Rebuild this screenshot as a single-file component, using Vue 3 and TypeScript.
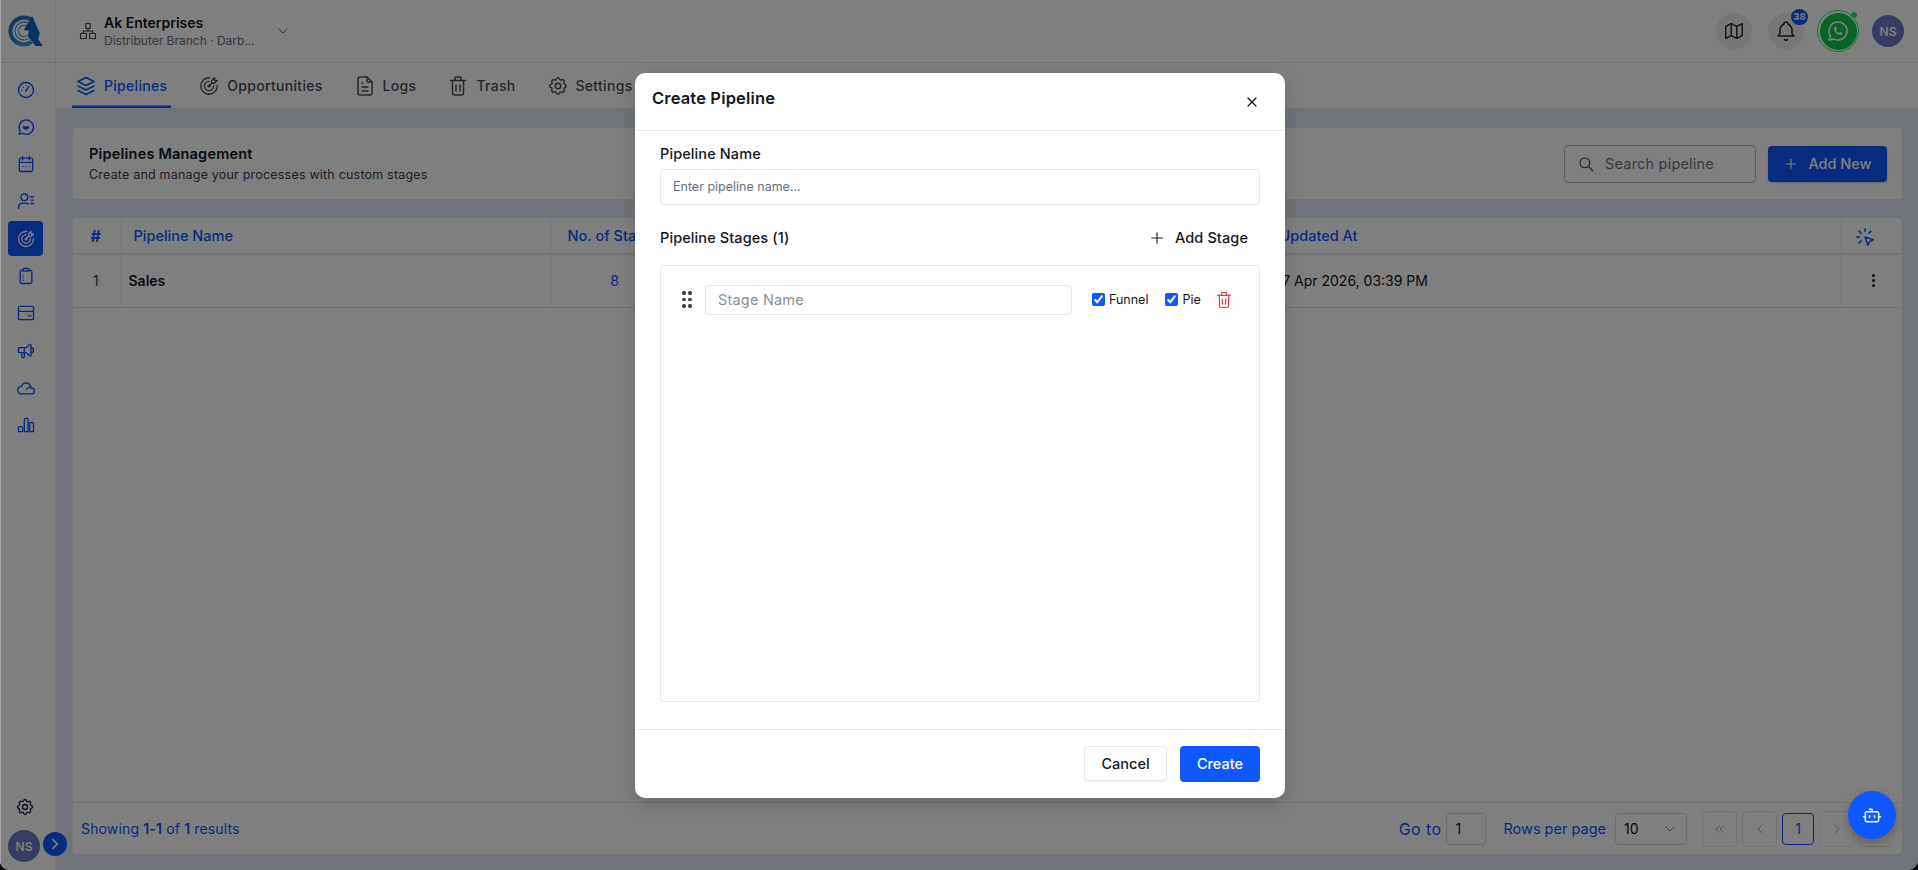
<script setup lang="ts">
import { h } from 'vue';

// a path starting with "F" is a filled shape, the rest are strokes
const icons: Record<string, string[]> = {
  gauge: ['M12 3a9 9 0 1 0 0 18a9 9 0 0 0 0 -18z', 'M11.500 13.500l4 -5.500', 'M7 12.500h.01', 'M8.800 8.800h.01', 'M12 7h.01'],
  chat: ['M3.500 20.500l1.700 -3.600a8.600 8.600 0 1 1 3 2.800z', 'FM8 11h8a4 4 0 0 1 -8 0z'],
  calendar: ['M4 7a2 2 0 0 1 2 -2h12a2 2 0 0 1 2 2v12a2 2 0 0 1 -2 2h-12a2 2 0 0 1 -2 -2z', 'M8 3v4', 'M16 3v4', 'M4 10h16', 'M8 15h.01', 'M12 15h.01', 'M16 15h.01'],
  users: ['M10 3.500a4 4 0 1 0 0 8a4 4 0 0 0 0 -8z', 'M3 21v-1.500a5 5 0 0 1 5 -5h4a5 5 0 0 1 3 1', 'M17 7h4', 'M18 11h3', 'M18 15h3'],
  target: ['M12 12m-1 0a1 1 0 1 0 2 0a1 1 0 1 0 -2 0', 'M12 7a5 5 0 1 0 5 5', 'M13 3.055a9 9 0 1 0 7.941 7.945', 'M15 6v3h3l3 -3h-3v-3z', 'M15 9l-3 3'],
  clipboard: ['M8 5h-1a2 2 0 0 0 -2 2v12a2 2 0 0 0 2 2h10a2 2 0 0 0 2 -2v-12a2 2 0 0 0 -2 -2h-1', 'M8 5a2 2 0 0 1 2 -2h4a2 2 0 0 1 2 2v1h-8z', 'M8.500 11h.01', 'M8.500 14h.01', 'M8.500 17h.01'],
  card: ['M3 5a1 1 0 0 1 1 -1h16a1 1 0 0 1 1 1v14a1 1 0 0 1 -1 1h-16a1 1 0 0 1 -1 -1z', 'M3 10h18', 'M15 15.500h3'],
  megaphone: ['M18 8a3 3 0 0 1 0 6', 'M10 8v11a1 1 0 0 1 -1 1h-1a1 1 0 0 1 -1 -1v-5', 'M12 8l4.524 -3.770a.9 .9 0 0 1 1.476 .692v12.156a.9 .9 0 0 1 -1.476 .692l-4.524 -3.770h-8a1 1 0 0 1 -1 -1v-4a1 1 0 0 1 1 -1z'],
  cloud: ['M6.657 19c-2.572 0 -4.657 -2.007 -4.657 -4.483c0 -2.475 2.085 -4.482 4.657 -4.482c.393 -1.762 1.794 -3.200 3.675 -3.773c1.880 -.572 3.956 -.193 5.444 1c1.488 1.190 2.162 3.007 1.770 4.769h.99c1.913 0 3.464 1.560 3.464 3.486c0 1.927 -1.551 3.483 -3.465 3.483z', 'M13 13.500a4 4 0 0 1 4.500 -2.500'],
  bars: ['M3 15a1 1 0 0 1 1 -1h3a1 1 0 0 1 1 1v5h-5z', 'M10 5a1 1 0 0 1 1 -1h2.500a1 1 0 0 1 1 1v15h-4.500z', 'M16.500 10a1 1 0 0 1 1 -1h2.500a1 1 0 0 1 1 1v10h-4.500z'],
  settings: ['M10.325 4.317c.426 -1.756 2.924 -1.756 3.350 0a1.724 1.724 0 0 0 2.573 1.066c1.543 -.94 3.310 .826 2.370 2.370a1.724 1.724 0 0 0 1.065 2.572c1.756 .426 1.756 2.924 0 3.350a1.724 1.724 0 0 0 -1.066 2.573c.94 1.543 -.826 3.310 -2.370 2.370a1.724 1.724 0 0 0 -2.572 1.065c-.426 1.756 -2.924 1.756 -3.350 0a1.724 1.724 0 0 0 -2.573 -1.066c-1.543 .94 -3.310 -.826 -2.370 -2.370a1.724 1.724 0 0 0 -1.065 -2.572c-1.756 -.426 -1.756 -2.924 0 -3.350a1.724 1.724 0 0 0 1.066 -2.573c-.94 -1.543 .826 -3.310 2.370 -2.370c1 .608 2.296 .07 2.572 -1.065z', 'M9 12a3 3 0 1 0 6 0a3 3 0 0 0 -6 0'],
  stack: ['M12 3.500l-8 4l8 4l8 -4z', 'M4 12l8 4l8 -4', 'M4 16.500l8 4l8 -4'],
  file: ['M14 3v4a1 1 0 0 0 1 1h4', 'M17 21h-10a2 2 0 0 1 -2 -2v-14a2 2 0 0 1 2 -2h7l5 5v11a2 2 0 0 1 -2 2z', 'M9 9h1', 'M9 13h6', 'M9 17h6'],
  trash: ['M4.500 6.500h15', 'M6.500 6.500v12.500a2 2 0 0 0 2 2h7a2 2 0 0 0 2 -2v-12.500', 'M9 6.500v-2.500a1 1 0 0 1 1 -1h4a1 1 0 0 1 1 1v2.500', 'M10 11v6', 'M14 11v6'],
  map: ['M3 7l6 -3l6 3l6 -3v13l-6 3l-6 -3l-6 3z', 'M9 4v13', 'M15 7v13'],
  bell: ['M10 5a2 2 0 1 1 4 0a7 7 0 0 1 4 6v3a4 4 0 0 0 2 3h-16a4 4 0 0 0 2 -3v-3a7 7 0 0 1 4 -6', 'M10.500 20.500a2 2 0 0 0 3 0'],
  whatsapp: ['M3 21l1.650 -3.800a9 9 0 1 1 3.400 2.900z', 'M9 10a.5 .5 0 0 0 1 0v-1a.5 .5 0 0 0 -1 0v1a5 5 0 0 0 5 5h1a.5 .5 0 0 0 0 -1h-1a.5 .5 0 0 0 0 1'],
  org: ['M9.500 3h5v6h-5z', 'M3 15h7v6h-7z', 'M14 15h7v6h-7z', 'M12 9v3', 'M6.500 15v-3h11v3'],
  click: ['M3 12h3', 'M12 3v3', 'M7.800 7.800l-2.200 -2.200', 'M16.200 7.800l2.200 -2.200', 'M7.800 16.200l-2.200 2.200', 'M12 12l9 3l-4 2l-2 4z'],
  search: ['M4 10.500a6.500 6.500 0 1 0 13 0a6.500 6.500 0 0 0 -13 0', 'M21 21l-5.800 -5.800'],
  plus: ['M12 5v14', 'M5 12h14'],
  x: ['M18 6l-12 12', 'M6 6l12 12'],
  down: ['M6 9l6 6l6 -6'],
  right: ['M9 6l6 6l-6 6'],
  left: ['M15 6l-6 6l6 6'],
  first: ['M11 7l-5 5l5 5', 'M17 7l-5 5l5 5'],
  robot: ['M12 8v-3h-3', 'M6 8h12a2 2 0 0 1 2 2v8a2 2 0 0 1 -2 2h-12a2 2 0 0 1 -2 -2v-8a2 2 0 0 1 2 -2z', 'M2 14h2', 'M20 14h2', 'M15 13v2', 'M9 13v2'],
};

const Icon = (props: { name: string; size?: number; width?: number }) =>
  h(
    'svg',
    {
      width: props.size ?? 20,
      height: props.size ?? 20,
      viewBox: '0 0 24 24',
      fill: 'none',
      stroke: 'currentColor',
      'stroke-width': props.width ?? 1.6,
      'stroke-linecap': 'round',
      'stroke-linejoin': 'round',
    },
    icons[props.name].map((d) =>
      d[0] === 'F' ? h('path', { d: d.slice(1), fill: 'currentColor', stroke: 'none' }) : h('path', { d }),
    ),
  );
Icon.props = ['name', 'size', 'width'];

const navItems = ['gauge', 'chat', 'calendar', 'users', 'target', 'clipboard', 'card', 'megaphone', 'cloud', 'bars'];
const activeNav = 'target';

const tabs = [
  { label: 'Pipelines', icon: 'stack', size: 24, active: true },
  { label: 'Opportunities', icon: 'target', size: 22, active: false },
  { label: 'Logs', icon: 'file', size: 24, active: false },
  { label: 'Trash', icon: 'trash', size: 24, active: false },
  { label: 'Settings', icon: 'settings', size: 22, active: false },
];
</script>

<template>
  <div class="window">
    <aside class="sidebar">
      <div class="logo">
        <svg width="36" height="34" viewBox="0 0 36 34" fill="none">
          <defs>
            <linearGradient id="lg" x1="0" y1="0" x2="1" y2="1">
              <stop offset="0" stop-color="#1f6cbc" />
              <stop offset="1" stop-color="#2f9ae8" />
            </linearGradient>
          </defs>
          <path d="M24.700 6.700A13.500 13.500 0 1 0 23.700 28" stroke="url(#lg)" stroke-width="4" />
          <path d="M21.200 9.600A9 9 0 1 0 21.800 23.900" stroke="#3aa0e8" stroke-width="1.200" />
          <path d="M18.750 12.200A5.500 5.500 0 1 0 19.500 21.200" stroke="#3aa0e8" stroke-width="1.200" />
          <path d="M24.200 2L15.800 16L20.800 16.700L19.800 22L27.500 32L34.800 32L30.200 25.300L31.800 19.300Z" fill="#1464c0" />
        </svg>
      </div>
      <nav class="nav">
        <a v-for="item in navItems" :key="item" class="nav-item" :class="{ active: item === activeNav }">
          <Icon :name="item" :size="20" />
        </a>
      </nav>
      <div class="side-foot">
        <Icon class="side-gear" name="settings" :size="20" />
        <div class="avatar">NS</div>
      </div>
      <button class="collapse"><Icon name="right" :size="18" :width="2.2" /></button>
    </aside>

    <div class="content">
      <header class="topbar">
        <div class="org">
          <Icon class="org-icon" name="org" :size="20" :width="1.3" />
          <div>
            <div class="org-name">Ak Enterprises</div>
            <div class="org-sub">Distributer Branch · Darb...</div>
          </div>
          <Icon class="org-down" name="down" :size="16" :width="1.4" />
        </div>
        <div class="top-actions">
          <button class="round"><Icon name="map" :size="22" :width="1.5" /></button>
          <button class="round bell">
            <Icon name="bell" :size="24" :width="1.5" />
            <span class="badge">38</span>
          </button>
          <button class="wa">
            <span class="wa-inner"><Icon name="whatsapp" :size="24" :width="1.6" /></span>
            <span class="wa-dot"></span>
          </button>
          <div class="avatar">NS</div>
        </div>
      </header>

      <div class="tabs">
        <a v-for="tab in tabs" :key="tab.label" class="tab" :class="{ active: tab.active }">
          <Icon :name="tab.icon" :size="tab.size" :width="1.5" />
          <span>{{ tab.label }}</span>
        </a>
      </div>

      <main class="page">
        <section class="intro">
          <div>
            <h2>Pipelines Management</h2>
            <p>Create and manage your processes with custom stages</p>
          </div>
          <div class="intro-actions">
            <label class="search">
              <Icon name="search" :size="18" :width="1.5" />
              <input placeholder="Search pipeline" />
            </label>
            <button class="add-new"><Icon name="plus" :size="16" />Add New</button>
          </div>
        </section>

        <section class="table-card">
          <div class="table-wrap">
            <table>
              <colgroup>
                <col style="width: 48px" />
                <col style="width: 429px" />
                <col style="width: 129px" />
                <col style="width: 588px" />
                <col />
                <col style="width: 61px" />
              </colgroup>
              <thead>
                <tr>
                  <th class="num">#</th>
                  <th>Pipeline Name</th>
                  <th class="center">No. of Stages</th>
                  <th></th>
                  <th>Updated At</th>
                  <th class="act"><Icon name="click" :size="22" :width="1.6" /></th>
                </tr>
              </thead>
              <tbody>
                <tr>
                  <td class="num">1</td>
                  <td class="name">Sales</td>
                  <td class="count">8</td>
                  <td></td>
                  <td>17 Apr 2026, 03:39 PM</td>
                  <td class="kebab"><span></span><span></span><span></span></td>
                </tr>
              </tbody>
            </table>
          </div>
          <footer class="pager">
            <div class="showing">Showing <b>1-1</b> of <b>1</b> results</div>
            <div class="pager-right">
              <span class="goto">Go to</span>
              <input class="goto-input" value="1" />
              <span class="rows">Rows per page</span>
              <div class="rows-select">10<Icon name="down" :size="16" :width="1.4" /></div>
              <div class="pages">
                <button class="pg"><Icon name="first" :size="16" :width="1.4" /></button>
                <button class="pg"><Icon name="left" :size="16" :width="1.4" /></button>
                <button class="pg current">1</button>
                <button class="pg"><Icon name="right" :size="16" :width="1.4" /></button>
                <button class="pg"></button>
              </div>
            </div>
          </footer>
        </section>
      </main>
    </div>

    <div class="overlay">
      <div class="modal">
        <div class="modal-head">
          <h3>Create Pipeline</h3>
          <button class="close"><Icon name="x" :size="16" :width="1.8" /></button>
        </div>
        <div class="modal-body">
          <label class="field-label">Pipeline Name</label>
          <input class="name-input" placeholder="Enter pipeline name..." />
          <div class="stages-head">
            <span class="field-label">Pipeline Stages (1)</span>
            <button class="add-stage"><Icon name="plus" :size="18" :width="1.5" />Add Stage</button>
          </div>
          <div class="stages-box">
            <div class="stage-row">
              <span class="grip"><i></i><i></i><i></i><i></i><i></i><i></i></span>
              <input class="stage-input" placeholder="Stage Name" />
              <label class="check"><input type="checkbox" checked />Funnel</label>
              <label class="check"><input type="checkbox" checked />Pie</label>
              <button class="stage-del"><Icon name="trash" :size="20" :width="1.4" /></button>
            </div>
          </div>
        </div>
        <div class="modal-foot">
          <button class="btn-cancel">Cancel</button>
          <button class="btn-create">Create</button>
        </div>
      </div>
    </div>

    <button class="fab"><Icon name="robot" :size="20" :width="1.8" /></button>
  </div>
</template>

<style>
html,
body {
  margin: 0;
  background: #0c0c0c;
}
</style>

<style scoped>
* {
  box-sizing: border-box;
}

button,
input {
  font-family: inherit;
}

button {
  border: 0;
  background: none;
  padding: 0;
  color: inherit;
}

.window {
  --blue: #0f57ff;
  position: relative;
  display: flex;
  width: 1918px;
  height: 870px;
  overflow: hidden;
  border-radius: 0 0 10px 10px;
  background: #e0e8f2;
  color: #14161f;
  font-family: Inter, 'Liberation Sans', sans-serif;
  font-size: 14px;
}

/* sidebar */
.sidebar {
  position: relative;
  z-index: 1;
  display: flex;
  flex-direction: column;
  flex: 0 0 56px;
  background: #fff;
  border-right: 1px solid #ebebeb;
}

.logo {
  display: flex;
  align-items: center;
  justify-content: center;
  height: 63px;
  padding-right: 4px;
  border-bottom: 1px solid #e2e2e2;
}

.nav {
  display: flex;
  flex-direction: column;
  gap: 2.300px;
  padding: 9px 8px 0;
}

.nav-item {
  display: flex;
  align-items: center;
  justify-content: center;
  flex: none;
  width: 35px;
  height: 35px;
  border-radius: 4px;
  color: var(--blue);
}

.nav-item.active {
  background: var(--blue);
  color: #fff;
}

.side-foot {
  display: flex;
  flex-direction: column;
  align-items: flex-start;
  gap: 13px;
  margin-top: auto;
  padding: 0 0 8px 8px;
}

.side-gear {
  margin-left: 7px;
  color: #1e2430;
}

.avatar {
  display: flex;
  align-items: center;
  justify-content: center;
  flex: none;
  width: 32px;
  height: 32px;
  border-radius: 50%;
  background: #7079c4;
  color: #fff;
  font-size: 12px;
  font-weight: 600;
}

.collapse {
  position: absolute;
  left: 43px;
  bottom: 14px;
  display: flex;
  align-items: center;
  justify-content: center;
  width: 24px;
  height: 24px;
  border-radius: 50%;
  background: var(--blue);
  color: #fff;
}

/* right column */
.content {
  display: flex;
  flex-direction: column;
  flex: 1;
  min-width: 0;
}

.topbar {
  display: flex;
  align-items: center;
  justify-content: space-between;
  flex: 0 0 63px;
  padding: 0 14px 0 22px;
  background: #fff;
  border-bottom: 1px solid #e2e2e2;
}

.org {
  display: flex;
  align-items: center;
  gap: 6px;
}

.org-icon {
  color: #3a3f4a;
}

.org-name {
  font-size: 14px;
  font-weight: 600;
  line-height: 18px;
}

.org-sub {
  margin-top: 1px;
  font-size: 12px;
  line-height: 16px;
  color: #6f7480;
}

.org-down {
  margin-left: 14px;
  color: #555a66;
}

.top-actions {
  display: flex;
  align-items: center;
}

.round {
  position: relative;
  display: flex;
  align-items: center;
  justify-content: center;
  width: 36px;
  height: 36px;
  border-radius: 50%;
  background: #eeeeee;
  color: #1e2430;
}

.bell {
  margin-left: 16px;
}

.badge {
  position: absolute;
  top: -4px;
  right: -4px;
  width: 17px;
  height: 16px;
  border-radius: 50%;
  background: var(--blue);
  color: #fff;
  font-size: 9.500px;
  font-weight: 700;
  line-height: 16px;
  text-align: center;
}

.wa {
  position: relative;
  width: 42px;
  height: 42px;
  margin: 0 13px 0 13px;
  border: 1.500px solid #20f070;
  border-radius: 50%;
  padding: 1.500px;
}

.wa-inner {
  display: flex;
  align-items: center;
  justify-content: center;
  width: 100%;
  height: 100%;
  border-radius: 50%;
  background: #10cc48;
  color: #fff;
}

.wa-dot {
  position: absolute;
  top: 1px;
  right: 1px;
  width: 6px;
  height: 6px;
  border-radius: 50%;
  background: #20f070;
}

/* tabs */
.tabs {
  display: flex;
  flex: 0 0 46px;
  gap: 24px;
  padding-left: 16px;
  background: #fff;
  border-bottom: 1px solid #e2e2e2;
}

.tab {
  display: flex;
  align-items: center;
  gap: 6px;
  padding: 0 4px 0 2px;
  color: #4a4f5a;
  font-size: 14px;
  font-weight: 500;
  letter-spacing: 0.3px;
}

.tab svg {
  width: 24px;
}

.tab.active {
  color: var(--blue);
  box-shadow: inset 0 -2.500px 0 var(--blue);
}

/* page */
.page {
  display: flex;
  flex-direction: column;
  flex: 1;
  gap: 17px;
  min-height: 0;
  padding: 18px 15px 15px 16px;
}

.intro {
  display: flex;
  align-items: center;
  justify-content: space-between;
  flex: 0 0 73px;
  padding: 0 15px 0 16px;
  background: #fff;
  border: 1px solid #e3e6ea;
  border-radius: 4px;
}

.intro h2 {
  margin: 0;
  font-size: 14.500px;
  font-weight: 600;
  letter-spacing: 0.2px;
  line-height: 20px;
}

.intro p {
  margin: 3px 0 0;
  font-size: 12.500px;
  letter-spacing: 0.2px;
  line-height: 16px;
  color: #3c414c;
}

.intro-actions {
  display: flex;
  align-items: center;
  gap: 12px;
}

.search {
  display: flex;
  align-items: center;
  gap: 10px;
  width: 192px;
  height: 38px;
  padding: 0 39px 0 12px;
  border: 1px solid #b5b8bd;
  border-radius: 4px;
  color: #444;
}

.search input {
  flex: 1;
  min-width: 0;
  border: 0;
  outline: 0;
  padding: 0;
  font-size: 14.500px;
  letter-spacing: 0.2px;
}

.search input::placeholder {
  color: #70747c;
}

.add-new {
  display: flex;
  align-items: center;
  justify-content: center;
  gap: 9px;
  width: 119px;
  height: 36px;
  border-radius: 4px;
  background: var(--blue);
  color: #fff;
  font-size: 14.500px;
  font-weight: 500;
  box-shadow: 0 1px 2px rgba(0, 0, 0, 0.2);
}

.table-card {
  display: flex;
  flex-direction: column;
  flex: 1;
  min-height: 0;
  background: #fff;
  border: 1px solid #e3e6ea;
  border-radius: 4px;
}

.table-wrap {
  flex: 1;
  min-height: 0;
}

table {
  width: 100%;
  table-layout: fixed;
  border-collapse: collapse;
}

th {
  height: 36px;
  padding: 0 12px;
  border-right: 1px solid #e3e6ea;
  border-bottom: 2px solid #e3e6ea;
  color: var(--blue);
  font-size: 14.500px;
  font-weight: 500;
  text-align: left;
  white-space: nowrap;
  overflow: hidden;
}

td {
  height: 53px;
  padding: 0 9px;
  border-right: 1px solid #e3e6ea;
  border-bottom: 1px solid #e3e6ea;
  font-size: 14px;
  white-space: nowrap;
}

th:last-child,
td:last-child {
  border-right: 0;
}

th.center {
  padding: 0;
  text-align: center;
}

th.num {
  padding: 0 2px 0 0;
  font-size: 16px;
  font-weight: 700;
  text-align: center;
}

td.num {
  padding: 0 2px 0 0;
  color: #3c414c;
  text-align: center;
}

td.name {
  padding-left: 7px;
  font-weight: 600;
}

td.count {
  color: var(--blue);
  text-align: center;
}

th.act {
  padding: 3px 0 0 12px;
  line-height: 0;
}

td.kebab {
  padding-left: 30px;
}

td.kebab span {
  display: block;
  width: 3px;
  height: 3px;
  margin: 2px 0;
  border-radius: 50%;
  background: #14161f;
}

.pager {
  display: flex;
  align-items: center;
  justify-content: space-between;
  flex: 0 0 52px;
  padding: 0 8px;
  border-top: 1px solid #e3e6ea;
  color: var(--blue);
}

.showing {
  letter-spacing: 0.15px;
}

.showing b {
  font-weight: 600;
}

.pager-right {
  display: flex;
  align-items: center;
}

.goto {
  font-size: 16px;
  letter-spacing: 0.4px;
}

.goto-input {
  width: 40px;
  height: 32px;
  margin-left: 5px;
  padding: 0 8px;
  border: 1px solid #d9d9d9;
  border-radius: 4px;
  color: #14161f;
  font-size: 14px;
}

.rows {
  margin-left: 17px;
  font-size: 14.500px;
}

.rows-select {
  display: flex;
  align-items: center;
  justify-content: space-between;
  width: 72px;
  height: 32px;
  margin-left: 9px;
  padding: 0 8px;
  border: 1px solid #d9d9d9;
  border-radius: 4px;
  color: #14161f;
}

.rows-select svg {
  color: #777;
}

.pages {
  display: flex;
  align-items: center;
  gap: 5px;
  margin-left: 15px;
}

.pg {
  display: flex;
  align-items: center;
  justify-content: center;
  width: 35px;
  height: 36px;
  border: 1px solid #e9e9e9;
  border-radius: 4px;
  color: #8aa3e6;
}

.pg.current {
  width: 32px;
  height: 32px;
  border-color: var(--blue);
  color: var(--blue);
  font-size: 14px;
}

/* modal */
.overlay {
  position: absolute;
  inset: 0;
  z-index: 5;
  display: flex;
  align-items: center;
  justify-content: center;
  padding-left: 2px;
  background: rgba(0, 0, 0, 0.5);
  box-shadow: inset 1px 0 0 rgba(255, 255, 255, 0.3);
}

.modal {
  display: flex;
  flex-direction: column;
  width: 650px;
  height: 725px;
  border-radius: 10px;
  background: #fff;
  box-shadow: 0 6px 18px rgba(0, 0, 0, 0.18);
}

.modal-head {
  display: flex;
  align-items: flex-start;
  justify-content: space-between;
  flex: 0 0 58px;
  padding: 15px 25px 0 17px;
  border-bottom: 1px solid #e8e9ee;
}

.modal-head h3 {
  margin: 0;
  font-size: 16.500px;
  font-weight: 600;
  letter-spacing: 0.15px;
  line-height: 20px;
}

.close {
  display: flex;
  margin-top: 6px;
}

.modal-body {
  display: flex;
  flex-direction: column;
  flex: 1;
  min-height: 0;
  padding: 13px 25px 27px;
}

.field-label {
  font-size: 14.500px;
  font-weight: 500;
  letter-spacing: 0.1px;
  line-height: 20px;
}

.name-input {
  width: 100%;
  height: 36px;
  margin-top: 5px;
  padding: 0 12px;
  border: 1px solid #e4e6ec;
  border-radius: 4px;
  font-size: 12.500px;
  outline: 0;
}

.name-input::placeholder {
  color: #64708a;
}

.stages-head {
  display: flex;
  align-items: center;
  justify-content: space-between;
  margin-top: 23px;
  padding-right: 12px;
}

.add-stage {
  display: flex;
  align-items: center;
  gap: 9px;
  font-size: 14.500px;
  font-weight: 500;
  letter-spacing: 0.1px;
}

.stages-box {
  flex: 1;
  min-height: 0;
  margin-top: 17px;
  padding: 19px 14px 0 21px;
  border: 1px solid #e4e6ec;
  border-radius: 4px;
}

.stage-row {
  display: flex;
  align-items: center;
}

.grip {
  display: grid;
  grid-template-columns: 3px 3px;
  gap: 3px 3px;
  margin-right: 14px;
}

.grip i {
  width: 3.500px;
  height: 3.500px;
  border-radius: 50%;
  background: #3a3f4a;
}

.stage-input {
  flex: 0 0 367px;
  height: 30px;
  margin-right: 20px;
  padding: 0 12px;
  border: 1px solid #e4e6ec;
  border-radius: 4px;
  font-size: 14.500px;
  letter-spacing: 0.2px;
  outline: 0;
}

.stage-input::placeholder {
  color: #8a8f99;
}

.check {
  display: flex;
  align-items: center;
  gap: 4px;
  margin-right: 17px;
  font-size: 12.500px;
}

.check input {
  width: 13px;
  height: 13px;
  margin: 0;
  accent-color: var(--blue);
}

.stage-del {
  display: flex;
  margin-left: -4px;
  color: #f0343c;
}

.modal-foot {
  display: flex;
  align-items: center;
  justify-content: flex-end;
  gap: 13px;
  flex: 0 0 69px;
  padding: 0 25px 0 0;
  border-top: 1px solid #e8e9ee;
}

.btn-cancel {
  width: 83px;
  height: 35px;
  border: 1px solid #e6e7ec;
  border-radius: 4px;
  font-size: 14.500px;
  font-weight: 500;
  box-shadow: 0 1px 2px rgba(0, 0, 0, 0.06);
}

.btn-create {
  width: 80px;
  height: 36px;
  border-radius: 4px;
  background: var(--blue);
  color: #fff;
  font-size: 14.500px;
  font-weight: 500;
}

.fab {
  position: absolute;
  right: 22px;
  bottom: 31px;
  z-index: 6;
  display: flex;
  align-items: center;
  justify-content: center;
  width: 48px;
  height: 48px;
  border-radius: 50%;
  background: var(--blue);
  color: #fff;
  box-shadow: 0 4px 10px rgba(0, 0, 0, 0.25);
}
</style>
